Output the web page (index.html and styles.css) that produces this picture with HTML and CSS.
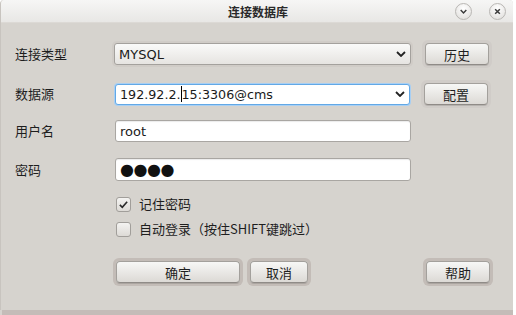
FILE: index.html
```html
<!DOCTYPE html>
<html lang="zh-CN">
<head>
  <meta charset="UTF-8" />
  <title>连接数据库</title>
  <link rel="stylesheet" href="styles.css">
</head>
<body>
  <div class="window">
    <div class="titlebar">
      <div class="title">连接数据库</div>
      <div class="title-buttons">
        <span class="round-btn">
          <svg viewBox="0 0 16 16"><path d="M5 6.5l3 3 3-3" /></svg>
        </span>
        <span class="round-btn">
          <svg viewBox="0 0 16 16"><path d="M5.5 5.5l5 5M10.5 5.5l-5 5" /></svg>
        </span>
      </div>
    </div>

    <div class="content">
      <div class="row row-1">
        <label class="label">连接类型</label>
        <div class="combo">
          <span class="combo-text">MYSQL</span>
          <svg class="arrow" viewBox="0 0 10 6"><path d="M1 1l4 4 4-4" /></svg>
        </div>
        <div class="btn-frame"><button class="btn">历史</button></div>
      </div>

      <div class="row row-2">
        <label class="label">数据源</label>
        <div class="combo combo-edit">
          <span class="combo-text">192.92.2.<span class="caret"></span>15:3306@cms</span>
          <svg class="arrow" viewBox="0 0 10 6"><path d="M1 1l4 4 4-4" /></svg>
        </div>
        <div class="btn-frame"><button class="btn">配置</button></div>
      </div>

      <div class="row row-3">
        <label class="label">用户名</label>
        <div class="input"><span class="input-text">root</span></div>
      </div>

      <div class="row row-4">
        <label class="label">密码</label>
        <div class="input input-tall"><span class="dots">●●●●</span></div>
      </div>

      <div class="checks">
        <div class="check">
          <span class="box">
            <svg viewBox="0 0 16 16"><path d="M3.5 8.5l3 3 6-7" /></svg>
          </span>
          <span class="check-label">记住密码</span>
        </div>
        <div class="check">
          <span class="box"></span>
          <span class="check-label">自动登录（按住SHIFT键跳过）</span>
        </div>
      </div>

      <div class="actions">
        <div class="btn-frame dark"><button class="btn btn-ok">确定</button></div>
        <div class="btn-frame dark"><button class="btn btn-cancel">取消</button></div>
        <div class="spacer"></div>
        <div class="btn-frame dark"><button class="btn">帮助</button></div>
      </div>
    </div>
  </div>
  <div class="shadow"></div>
</body>
</html>
```

FILE: styles.css
```css
* {
  margin: 0; padding: 0; box-sizing: border-box;
}
body {
  background: #ffffff;
  width: 516px;
  height: 315px;
  overflow: hidden;
  font-family: "Noto Sans CJK SC", "DejaVu Sans", sans-serif;
  font-size: 13px;
  color: #1e1e1e;
}
.window {
  width: 513px;
  height: 310px;
  background: #d6d3ce;
  border-left: 1px solid #c8c4bf;
  border-radius: 4px 4px 0 0;
  overflow: hidden;
}
.shadow {
  width: 513px;
  height: 5px;
  background: #c4bcb8;
  border-left: 2px solid #d6d3ce;
}
.titlebar {
  height: 23px;
  background: linear-gradient(#f6f6f5, #e8e7e5);
  border-bottom: 1px solid #dcd9d5;
  display: flex;
  align-items: center;
  justify-content: center;
  position: relative;
}
.title {
  font-weight: bold;
  font-size: 12px;
  color: #2a2a2a;
  margin-left: 2px;
}
.title-buttons {
  position: absolute;
  right: 7px;
  top: 3px;
  display: flex;
  gap: 17px;
}
.round-btn {
  width: 17px;
  height: 17px;
  border-radius: 50%;
  border: 1px solid #b9b7b4;
  background: radial-gradient(circle at 50% 30%, #ffffff, #dedcd9);
  display: flex;
  align-items: center;
  justify-content: center;
}
.round-btn svg {
  width: 15px;
  height: 15px;
  fill: none;
  stroke: #3a3a3a;
  stroke-width: 1.6;
}
.content {
  padding-left: 14px;
}
.row {
  display: flex;
  align-items: center;
  height: 22px;
}
.row-1 { margin-top: 20px; }
.row-2 { margin-top: 18px; }
.row-3 { margin-top: 15px; }
.row-4 { margin-top: 16px; height: 23px; }
.label {
  width: 99px;
  flex: none;
  margin-top: -1px;
}
.combo, .input {
  width: 297px;
  height: 22px;
  border: 1px solid #a4a19d;
  border-radius: 3px;
  display: flex;
  align-items: center;
  padding-left: 4px;
  flex: none;
}
.combo {
  background: linear-gradient(#fafaf9, #e6e4e1);
  box-shadow: 0 0 0 2px #d0ccc7;
}
.combo-edit {
  background: #ffffff;
  border-color: #62a8e6;
  box-shadow: 0 0 0 1px #a8cff3;
  margin-left: 1px;
  width: 295px;
  height: 21px;
}
.combo-text, .input-text {
  font-family: "DejaVu Sans", sans-serif;
  font-size: 13px;
  color: #1a1a1a;
  flex: 1;
  white-space: nowrap;
}
.combo-edit .combo-text {
  font-size: 12.7px;
}
.caret {
  display: inline-block;
  width: 1px;
  height: 16px;
  background: #000;
  vertical-align: -3px;
}
.arrow {
  width: 10px;
  height: 6px;
  fill: none;
  stroke: #222;
  stroke-width: 1.8;
  margin-right: 4px;
}
.input {
  background: #ffffff;
  margin-left: 1px;
  width: 296px;
  border-color: #a9a6a2;
  box-shadow: inset 0 1px 1px rgba(0,0,0,0.08);
}
.input-tall { height: 23px; }
.dots {
  font-family: "DejaVu Sans", sans-serif;
  font-size: 16px;
  color: #111;
  letter-spacing: -0.5px;
  line-height: 1;
}
.btn-frame {
  margin-left: 14px;
  padding: 0;
  border-radius: 3px;
  box-shadow: 0 0 0 3px #d0ccc8;
  flex: none;
}
.btn-frame.dark {
  box-shadow: 0 0 0 3px #c3bcb7;
}
.btn {
  display: block;
  width: 64px;
  height: 22px;
  font-family: "Noto Sans CJK SC", sans-serif;
  font-size: 13px;
  color: #1e1e1e;
  background: linear-gradient(#f7f7f6, #dcd9d5);
  border: 1px solid #a3a09c;
  border-bottom-color: #8f8b87;
  border-radius: 4px;
  box-shadow: 0 1px 0 rgba(0,0,0,0.12);
  line-height: 19px;
}
.checks {
  margin-top: 16px;
  margin-left: 101px;
  display: flex;
  flex-direction: column;
  gap: 10px;
}
.check {
  display: flex;
  align-items: center;
  height: 15px;
}
.box {
  width: 15px;
  height: 15px;
  border: 1px solid #a19e9a;
  border-radius: 3px;
  background: linear-gradient(#f4f3f1, #dddad6);
  display: flex;
  align-items: center;
  justify-content: center;
}
.box svg {
  width: 13px;
  height: 13px;
  fill: none;
  stroke: #2a2a2a;
  stroke-width: 2;
}
.check-label {
  margin-left: 8px;
  margin-top: -2px;
}
.actions {
  margin-top: 24px;
  margin-left: 101px;
  display: flex;
  align-items: center;
  width: 374px;
}
.actions .btn-frame:first-child { margin-left: 0; }
.actions .btn-frame { margin-left: 10px; }
.btn-ok { width: 124px; }
.btn-cancel { width: 58px; }
.spacer { flex: 1; }
```
